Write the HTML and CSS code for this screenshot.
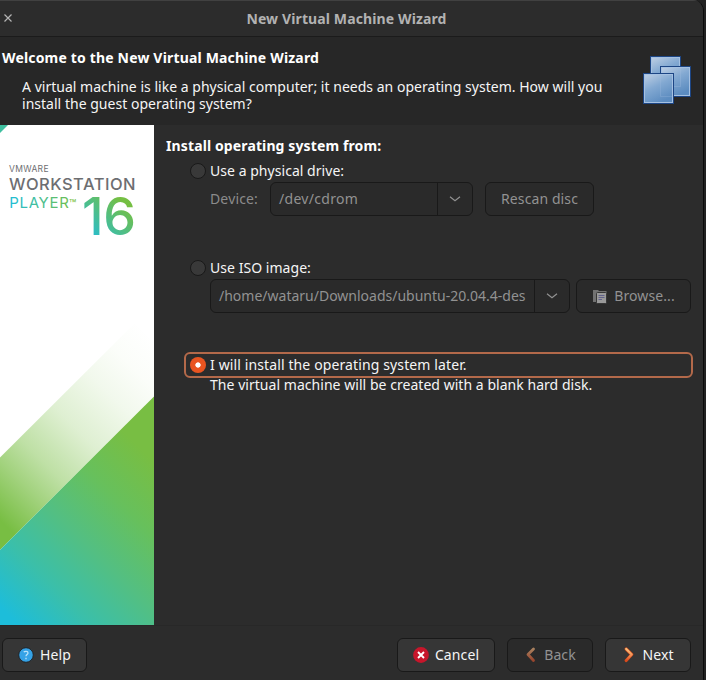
FILE: index.html
```html
<!DOCTYPE html>
<html lang="en">
<head>
<meta charset="utf-8">
<title>New Virtual Machine Wizard</title>
<link rel="stylesheet" href="styles.css">
</head>
<body>
<main class="window">
  <header class="titlebar">
    <svg class="close" width="8" height="8" viewBox="0 0 8 8"><path d="M.5 .5l7 7M7.5 .5l-7 7" stroke="#b4b4b4" stroke-width="1.2"/></svg>
    <h1>New Virtual Machine Wizard</h1>
  </header>

  <section class="intro">
    <div class="intro-text">
      <h2>Welcome to the New Virtual Machine Wizard</h2>
      <p>A virtual machine is like a physical computer; it needs an operating system. How will you<br>install the guest operating system?</p>
    </div>
    <svg class="vm-icon" width="48" height="48" viewBox="0 0 48 48">
      <defs>
        <linearGradient id="pane" x1="0" y1="0" x2=".5" y2="1"><stop offset="0" stop-color="#c3d2e5"/><stop offset=".5" stop-color="#83a9d2"/><stop offset="1" stop-color="#5c8cc0"/></linearGradient>
      </defs>
      <g fill="url(#pane)" stroke="#1d4685">
        <rect x="7.500" y=".5" width="30" height="30"/><rect x="8.500" y="1.500" width="28" height="28" fill="none" stroke="#a5c1e2"/>
        <rect x="17.500" y="10.500" width="30" height="30"/><rect x="18.500" y="11.500" width="28" height="28" fill="none" stroke="#a5c1e2"/>
        <path d="M18 30.500h19.500v-19" fill="none" stroke="#a5c1e2" opacity=".3"/>
        <rect x=".5" y="17.500" width="30" height="30"/><rect x="1.500" y="18.500" width="28" height="28" fill="none" stroke="#a5c1e2"/>
        <path d="M17.500 18v22.500h12" fill="none" stroke="#a5c1e2" opacity=".25"/>
      </g>
    </svg>
  </section>

  <div class="content">
    <svg class="banner" width="154" height="500" viewBox="0 0 154 500">
      <defs>
        <linearGradient id="deep" gradientUnits="userSpaceOnUse" x1="8" y1="490" x2="157.500" y2="340.500"><stop offset="0" stop-color="#1dbdda"/><stop offset=".25" stop-color="#3bbfa9"/><stop offset=".5" stop-color="#53bf82"/><stop offset=".75" stop-color="#67c05c"/><stop offset="1" stop-color="#78be43"/></linearGradient>
        <linearGradient id="fade" gradientUnits="userSpaceOnUse" x1="10" y1="405" x2="177.500" y2="237.500"><stop offset="0" stop-color="#78be43"/><stop offset=".18" stop-color="#78be43" stop-opacity=".68"/><stop offset=".3" stop-color="#78be43" stop-opacity=".48"/><stop offset=".5" stop-color="#78be43" stop-opacity=".24"/><stop offset=".7" stop-color="#78be43" stop-opacity=".1"/><stop offset=".85" stop-color="#78be43" stop-opacity=".03"/><stop offset="1" stop-color="#78be43" stop-opacity="0"/></linearGradient>
        <linearGradient id="player" gradientUnits="userSpaceOnUse" x1="10" y1="0" x2="76" y2="0"><stop offset="0" stop-color="#22bdd6"/><stop offset="1" stop-color="#76bf43"/></linearGradient>
        <linearGradient id="number" gradientUnits="userSpaceOnUse" x1="91" y1="112" x2="122" y2="76"><stop offset="0" stop-color="#26bdd0"/><stop offset="1" stop-color="#75bf43"/></linearGradient>
      </defs>
      <path d="M0 0h154v500H0z" fill="#fff"/>
      <path d="M0 0h8L0 8z" fill="#3fbf9f"/>
      <path d="M0 332.500L154 179v92.500L0 425z" fill="url(#fade)"/>
      <path d="M0 425L154 271.500V500H0z" fill="url(#deep)"/>
      <text class="brand" x="9" y="46.800" textLength="39.500" font-size="8.500" fill="#6d6e71">VMWARE</text>
      <text class="brand medium" x="9" y="64.500" textLength="126.500" font-size="16.500" fill="#6d6e71">WORKSTATION</text>
      <text class="brand" x="9.300" y="83.300" textLength="59.500" font-size="15" fill="url(#player)">PLAYER</text>
      <text class="brand tm" x="69" y="83" textLength="8" font-size="12" fill="#76bf43">™</text>
      <text class="number" x="82" y="110" textLength="54" font-size="52" fill="url(#number)">16</text>
    </svg>

    <section class="form">
      <h2>Install operating system from:</h2>
      <div class="option"><span class="radio"></span><span class="text">Use a physical drive:</span></div>
      <div class="row device">
        <span class="label">Device:</span>
        <div class="combo"><span class="value">/dev/cdrom</span><span class="arrow"><svg width="12" height="6" viewBox="0 0 12 6"><path d="M1 .7l5 4 5-4" fill="none" stroke="#929292" stroke-width="1.200"/></svg></span></div>
        <button class="disabled rescan"><span class="text">Rescan disc</span></button>
      </div>
      <div class="option"><span class="radio"></span><span class="text">Use ISO image:</span></div>
      <div class="row iso">
        <div class="combo"><span class="value">/home/wataru/Downloads/ubuntu-20.04.4-des</span><span class="arrow"><svg width="12" height="6" viewBox="0 0 12 6"><path d="M1 .7l5 4 5-4" fill="none" stroke="#929292" stroke-width="1.200"/></svg></span></div>
        <button class="disabled browse"><svg width="16" height="15" viewBox="0 0 16 15"><path d="M1 1h5l1 1h7.500v11H1z" fill="#727272"/><rect x="4.500" y="3.500" width="10" height="11" rx="1" fill="#9a9a9a" stroke="#373737"/><path d="M6.500 6.500h6M6.500 8.500h6M6.500 10.500h3.500" stroke="#62628b"/></svg><span class="text">Browse...</span></button>
      </div>
      <div class="option selected"><span class="radio on"></span><span class="text">I will install the operating system later.</span></div>
      <p class="note">The virtual machine will be created with a blank hard disk.</p>
    </section>
  </div>

  <footer class="actions">
    <button class="help"><svg width="16" height="16" viewBox="0 0 16 16"><circle cx="8" cy="8" r="7.300" fill="#35a2e6" stroke="#202428"/><path d="M5.800 5.200C6.500 4.200 10 3.700 10 6c0 1.500-2 1.500-2 3.300M8 10.800v1.500" fill="none" stroke="#b9e2fa" stroke-width="1.300"/></svg><span class="text">Help</span></button>
    <button class="cancel"><svg width="16" height="16" viewBox="0 0 16 16"><circle cx="8" cy="8" r="7.900" fill="#c7162b"/><path d="M5 5l6 6M11 5l-6 6" stroke="#fff" stroke-width="1.900"/></svg><span class="text">Cancel</span></button>
    <button class="disabled back"><svg width="12" height="16" viewBox="0 0 12 16"><defs><linearGradient id="backfill" x1="0" y1="0" x2="0" y2="1"><stop offset="0" stop-color="#a9815f"/><stop offset="1" stop-color="#98452d"/></linearGradient></defs><path d="M9.500 2L4 7.500 9.500 13.500" fill="none" stroke="url(#backfill)" stroke-width="2.800" stroke-linecap="round" stroke-linejoin="round"/></svg><span class="text">Back</span></button>
    <button class="next"><svg width="12" height="16" viewBox="0 0 12 16"><defs><linearGradient id="nextfill" x1="0" y1="0" x2="0" y2="1"><stop offset="0" stop-color="#fbc07c"/><stop offset=".5" stop-color="#f4965a"/><stop offset="1" stop-color="#dd4a1e"/></linearGradient></defs><path d="M4.200 2l5.500 5.500-5.500 6" fill="none" stroke="#c94a1b" stroke-width="3.200" stroke-linecap="round" stroke-linejoin="round"/><path d="M4.200 2l5.500 5.500-5.500 6" fill="none" stroke="url(#nextfill)" stroke-width="2.200" stroke-linecap="round" stroke-linejoin="round"/></svg><span class="text">Next</span></button>
  </footer>
</main>
</body>
</html>
```
FILE: styles.css
```css
* { box-sizing: border-box; }

body {
  margin: 0;
  height: 680px;
  overflow: hidden;
  background: #222;
  color: #f5f5f5;
  font: 14px/17px "Noto Sans", "Open Sans", sans-serif;
  letter-spacing: 0.04px;
}

h1, h2, p { margin: 0; font-size: 14px; }
svg { display: block; flex: none; }
.text { padding-bottom: 2px; }

.window {
  width: 704px;
  height: 680px;
  background: #2c2c2c;
  border-right: 1px solid #0b0b0b;
  border-top-right-radius: 11px;
  overflow: hidden;
}

.titlebar {
  display: grid;
  grid-template-columns: 12px 1fr 26px;
  align-items: center;
  height: 37px;
  padding-left: 4px;
  background: #2c2c2c;
  border-top: 1px solid #414141;
  border-bottom: 1px solid #1b1b1b;
}
.close { margin-top: -1px; }
.titlebar h1 {
  color: #b2b2b2;
  text-align: center;
  letter-spacing: 0.12px;
}

.intro {
  display: flex;
  justify-content: space-between;
  height: 88px;
  padding: 12px 12px 0 2px;
  background: #272727;
}
.intro h2 { color: #fff; letter-spacing: 0.17px; }
.intro p { padding: 12px 0 0 20px; letter-spacing: 0.02px; white-space: nowrap; }
.vm-icon { margin-top: 7px; }

.content { display: flex; height: 500px; }
.brand { font-family: Inter, sans-serif; letter-spacing: 0; }
.brand.medium { font-weight: 500; }
.number { font-family: Inter, sans-serif; font-weight: 500; letter-spacing: 0; }

.form { flex: 1; padding: 12px 10px 0 12px; }
.form h2 { color: #fff; letter-spacing: 0.12px; }

.option {
  display: flex;
  align-items: center;
  gap: 4px;
  height: 26px;
  width: 509px;
  margin: 4px 0 0 18px;
  padding-left: 6px;
}
.form h2 + .option { height: 24px; margin-top: 5px; }
.radio {
  width: 16px;
  height: 16px;
  border: 1px solid #191919;
  border-radius: 50%;
  background: #393939;
}
.radio.on {
  border: 0;
  background: radial-gradient(circle, #fff 2.3px, #e95420 3px);
}

.row { display: flex; height: 34px; margin-left: 44px; }
.label { width: 60px; line-height: 34px; color: #8b8b8b; letter-spacing: 0.15px; }
.device { margin-top: -1px; margin-bottom: 39px; }
.iso { margin-top: -2px; margin-bottom: 39px; }

.combo {
  display: flex;
  width: 203px;
  border: 1px solid #191919;
  border-radius: 6px;
  background: #2a2a2a;
  color: #929292;
}
.value {
  flex: 1;
  min-width: 0;
  padding-left: 8px;
  line-height: 32px;
  letter-spacing: 0.3px;
}
.arrow {
  display: grid;
  place-items: center;
  width: 35px;
  border-left: 1px solid #191919;
}
.iso .combo { width: 360px; }
.iso .value { letter-spacing: 0; white-space: nowrap; }

button {
  display: flex;
  align-items: center;
  justify-content: center;
  height: 34px;
  padding: 0;
  border: 1px solid #191919;
  border-radius: 6px;
  background: #363636;
  color: #f5f5f5;
  font: inherit;
  letter-spacing: 0.1px;
}
button.disabled { background: #2a2a2a; color: #929292; }
.rescan { width: 109px; margin-left: 12px; }
.browse { width: 115px; margin-left: 6px; gap: 6px; }

.option.selected {
  margin-top: 0;
  padding-left: 4px;
  border: 2px solid #b3694a;
  border-radius: 6px;
}
.selected .text { letter-spacing: 0.12px; }
.note { margin-top: -1px; padding-left: 44px; line-height: 15px; }

.actions {
  display: flex;
  height: 55px;
  padding: 12px 12px 0 2px;
  border-top: 1px solid #282828;
}
.actions button { gap: 6px; }
.help { width: 85px; }
.cancel { width: 98px; margin-left: auto; }
.back { width: 86px; margin-left: 12px; }
.next { width: 86px; margin-left: 12px; }
.actions .back, .actions .next { gap: 8px; }
```
